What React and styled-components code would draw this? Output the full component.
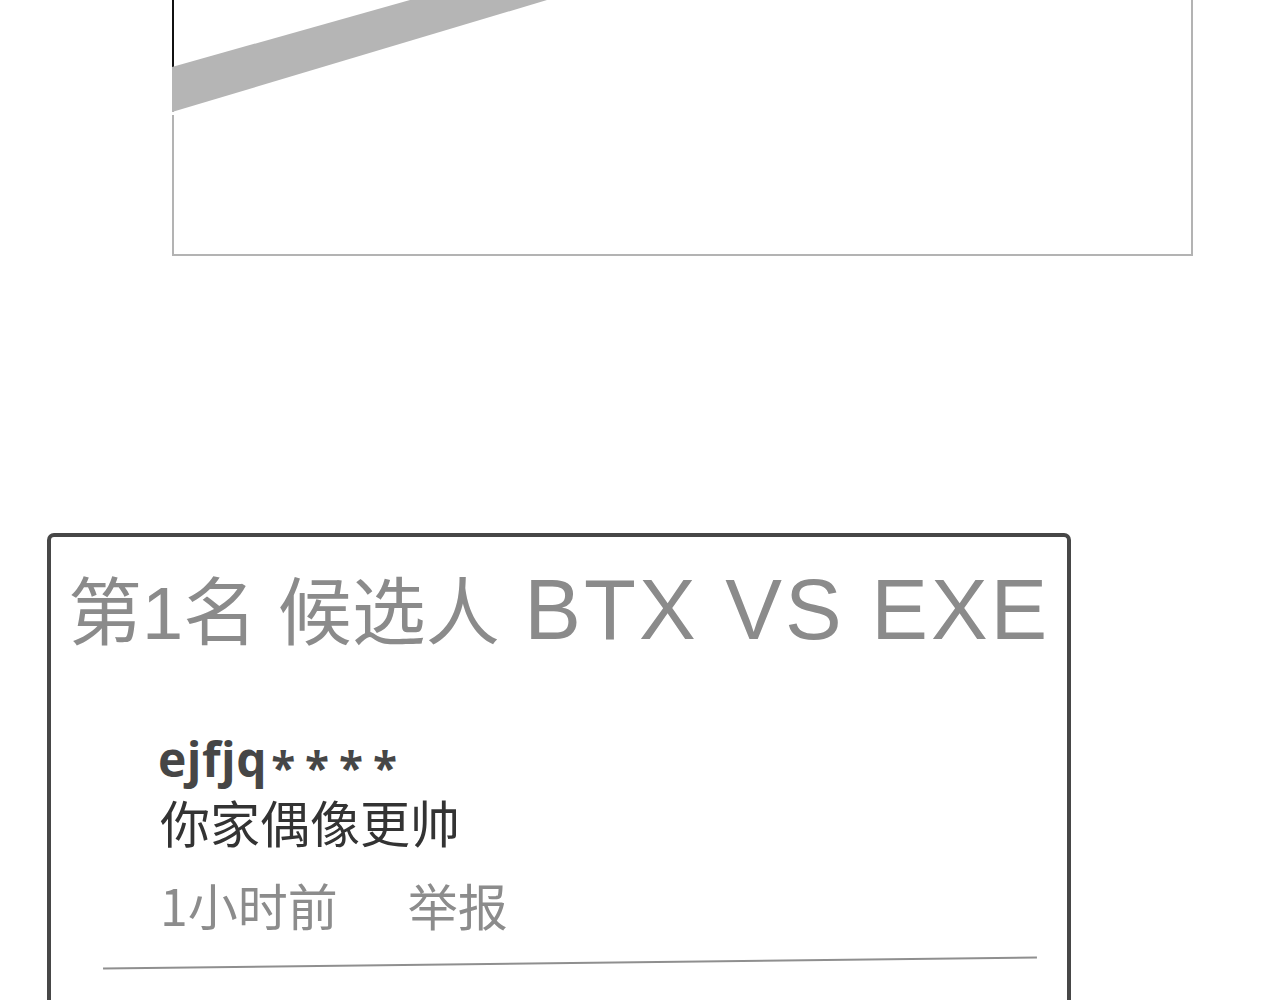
import React from "react";
import styled, { createGlobalStyle } from "styled-components";

const GlobalStyle = createGlobalStyle`
  html, body {
    margin: 0;
    padding: 0;
    background: #ffffff;
  }
  body {
    font-family: "Noto Sans CJK SC", "Noto Sans", sans-serif;
    overflow: hidden;
  }
`;

const Page = styled.div`
  width: 1280px;
  height: 1000px;
  overflow: hidden;
  display: flex;
  flex-direction: column;
  align-items: flex-start;
`;

/* Upper comic frame, cut off by the top of the page */
const Frame = styled.div`
  position: relative;
  box-sizing: border-box;
  margin-left: 172px;
  width: 1021px;
  height: 256px;
  border: 2px solid #b3b3b3;
  border-top: none;
  flex-shrink: 0;
`;

const FrameArt = styled.svg`
  position: absolute;
  left: -2px;
  top: 0;
  overflow: visible;
`;

/* Lower frame holding the ranked comment */
const Card = styled.section`
  box-sizing: border-box;
  margin: 277px 0 0 47px;
  width: 1024px;
  height: 600px;
  border: 4px solid #474747;
  border-bottom: none;
  border-radius: 7px 7px 0 0;
  padding: 30px 0 0 17px;
  flex-shrink: 0;
`;

const Title = styled.h1`
  margin: 0;
  font-weight: 400;
  color: #8b8b8b;
  white-space: nowrap;
  line-height: 86px;
  font-family: "Liberation Sans", "Noto Sans CJK SC", sans-serif;
`;

const TitleRank = styled.span`
  font-size: 74px;
`;

const TitleVs = styled.span`
  margin-left: 4px;
  font-size: 85px;
  letter-spacing: 3px;
`;

const Comment = styled.article`
  display: flex;
  flex-direction: column;
  align-items: flex-start;
  margin: 64px 0 0 90px;
`;

const User = styled.div`
  font-family: "Open Sans", "Noto Sans", sans-serif;
  font-weight: 700;
  font-size: 48px;
  line-height: 48px;
  color: #464646;
  letter-spacing: 0.5px;
`;

const Stars = styled.span`
  margin-left: 4px;
  font-size: 44px;
  letter-spacing: 10px;
  vertical-align: -7px;
`;

const Body = styled.p`
  margin: 2px 0 0 2px;
  font-family: "Noto Sans CJK SC", sans-serif;
  font-size: 50px;
  line-height: 56px;
  color: #333333;
`;

const Meta = styled.div`
  display: flex;
  gap: 70px;
  margin: 27px 0 0 2px;
  font-family: "Noto Sans CJK SC", sans-serif;
  font-size: 50px;
  line-height: 56px;
  color: #8c8c8c;
`;

const Divider = styled.div`
  margin: 30px 0 0 35px;
  width: 934px;
  height: 2px;
  background: #8f8f8f;
  transform: rotate(-0.68deg);
`;

export default function App() {
  return (
    <>
      <GlobalStyle />
      <Page>
        <Frame>
          <FrameArt width="400" height="120" viewBox="0 0 400 120">
            <rect x="0" y="0" width="2" height="67" fill="#111" />
            <polygon points="0,67 238,0 375,0 0,112" fill="#b5b5b5" />
            <rect x="0" y="112" width="2" height="3" fill="#fff" />
          </FrameArt>
        </Frame>
        <Card>
          <Title>
            <TitleRank>第1名 候选人 </TitleRank>
            <TitleVs>BTX VS EXE</TitleVs>
          </Title>
          <Comment>
            <User>
              ejfjq<Stars>****</Stars>
            </User>
            <Body>你家偶像更帅</Body>
            <Meta>
              <span>1小时前</span>
              <span>举报</span>
            </Meta>
          </Comment>
          <Divider />
        </Card>
      </Page>
    </>
  );
}
